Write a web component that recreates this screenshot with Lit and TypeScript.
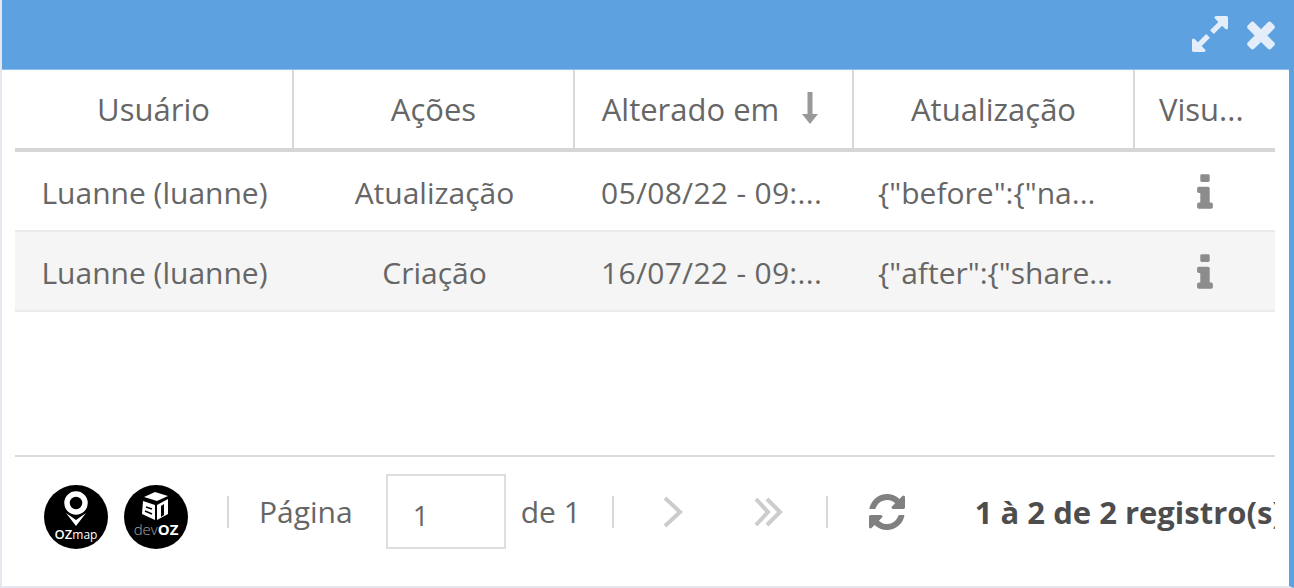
import { LitElement, html, css, svg } from 'lit';
import { customElement } from 'lit/decorators.js';

const ICONS = {
  expand: 'M883 1056q0 13-10 23l-332 332 144 144q19 19 19 45t-19 45-45 19h-448q-26 0-45-19t-19-45v-448q0-26 19-45t45-19 45 19l144 144 332-332q10-10 23-10t23 10l114 114q10 10 10 23zm781-864v448q0 26-19 45t-45 19-45-19l-144-144-332 332q-10 10-23 10t-23-10l-114-114q-10-10-10-23t10-23l332-332-144-144q-19-19-19-45t19-45 45-19h448q26 0 45 19t19 45z',
  times: 'M1490 1322q0 40-28 68l-136 136q-28 28-68 28t-68-28l-294-294-294 294q-28 28-68 28t-68-28l-136-136q-28-28-28-68t28-68l294-294-294-294q-28-28-28-68t28-68l136-136q28-28 68-28t68 28l294 294 294-294q28-28 68-28t68 28l136 136q28 28 28 68t-28 68l-294 294 294 294q28 28 28 68z',
  info: 'M1216 1344v128q0 26-19 45t-45 19h-512q-26 0-45-19t-19-45v-128q0-26 19-45t45-19h64v-384h-64q-26 0-45-19t-19-45v-128q0-26 19-45t45-19h384q26 0 45 19t19 45v576h64q26 0 45 19t19 45zm-128-1152v192q0 26-19 45t-45 19h-256q-26 0-45-19t-19-45v-192q0-26 19-45t45-19h256q26 0 45 19t19 45z',
  refresh: 'M1639 1056q0 5-1 7-64 268-268 434.5t-478 166.5q-146 0-282.5-55t-243.5-157l-129 129q-19 19-45 19t-45-19-19-45v-448q0-26 19-45t45-19h448q26 0 45 19t19 45-19 45l-137 137q71 66 161 102t187 36q134 0 250-65t186-179q11-17 53-117 8-23 30-23h192q13 0 22.5 9.5t9.5 22.5zm25-800v448q0 26-19 45t-45 19h-448q-26 0-45-19t-19-45 19-45l138-138q-148-137-349-137-134 0-250 65t-186 179q-11 17-53 117-8 23-30 23h-199q-13 0-22.5-9.5t-9.5-22.5v-7q65-268 270-434.5t480-166.5q146 0 284 55.5t245 156.5l130-129q19-19 45-19t45 19 19 45z',
};

const faIcon = (name: keyof typeof ICONS, size: number, cls: string) => html`
  <svg class=${cls} width=${size} height=${size} viewBox="0 0 1792 1792" fill="currentColor">
    <path d=${ICONS[name]}></path>
  </svg>
`;

const rows = [
  { user: 'Luanne (luanne)', action: 'Atualização', date: '05/08/22 - 09:...', update: '{"before":{"na...' },
  { user: 'Luanne (luanne)', action: 'Criação', date: '16/07/22 - 09:...', update: '{"after":{"share...' },
];

@customElement('app-root')
export class AppRoot extends LitElement {
  static styles = css`
    :host {
      display: block;
      height: 588px;
      font-family: 'Open Sans', 'Noto Sans', sans-serif;
      font-size: 30px;
      color: #666;
    }
    .window {
      box-sizing: border-box;
      height: 588px;
      display: flex;
      flex-direction: column;
      background: #fff;
      border-left: 2px solid #e4e8ee;
      border-right: 5px solid #5da1e0;
      border-bottom: 2px solid #e4e8ee;
      overflow: hidden;
    }
    .titlebar {
      flex: none;
      height: 69px;
      margin: 0 -5px 0 -2px;
      background: #5da1e0;
      border-bottom: 1px solid #8dbdea;
      display: flex;
      justify-content: flex-end;
      align-items: center;
      padding-right: 12px;
      color: #e3eefa;
    }
    .titlebar svg { display: block; }
    .expand { margin-right: 9px; margin-top: -1px; }
    .close { margin-top: -1px; }
    .content {
      flex: 1;
      display: flex;
      flex-direction: column;
      min-height: 0;
      padding: 0 14px 0 13px;
    }
    .grid {
      display: grid;
      grid-template-columns: 279px 281px 279px 281px 140px;
    }
    .head {
      height: 82px;
      box-sizing: border-box;
      border-bottom: 4px solid #d6d6d6;
      font-size: 31px;
    }
    .th {
      display: flex;
      align-items: center;
      justify-content: center;
      gap: 22px;
      border-right: 2px solid #d9d9d9;
      white-space: nowrap;
    }
    .th:last-child { border-right: none; justify-content: flex-start; padding-left: 24px; }
    .arrow { color: #999; margin: -2px 6px 0 0; }
    .row {
      height: 80px;
      box-sizing: border-box;
      border-bottom: 2px solid #ebebeb;
      align-items: center;
      padding-top: 3px;
    }
    .row.alt { background: #f5f5f5; }
    .td {
      padding: 0 24px;
      text-align: center;
      white-space: nowrap;
    }
    .td.left { text-align: left; }
    .td.date { letter-spacing: 0.3px; padding-left: 26px; padding-right: 0; }
    .td.info { padding: 0; color: #8c8c8c; }
    .td.info svg { display: block; margin: 0 auto; }
    .spacer { flex: 1; }
    .footer {
      flex: none;
      height: 131px;
      box-sizing: border-box;
      border-top: 2px solid #dcdcdc;
      display: flex;
      align-items: center;
      overflow: hidden;
      padding-bottom: 20px;
      white-space: nowrap;
    }
    .logos { display: flex; gap: 16px; margin-left: 29px; margin-top: 11px; }
    .logos svg { display: block; }
    .sep {
      flex: none;
      width: 2px;
      height: 32px;
      background: #d9d9d9;
    }
    .sep.first { margin-left: 39px; margin-right: 30px; }
    .sep.second { margin-left: 31px; }
    .sep.third { margin-left: 20px; }
    .input {
      flex: none;
      box-sizing: border-box;
      width: 120px;
      height: 75px;
      margin: 0 15px 0 33px;
      border: 2px solid #dedede;
      padding: 6px 0 0 25px;
      display: flex;
      align-items: center;
      font-size: 28px;
    }
    .nav { flex: none; display: flex; align-items: center; justify-content: center; color: #cccccc; }
    .nav svg { display: block; }
    .next { width: 118px; }
    .last { width: 74px; }
    .reload { width: 118px; color: #808080; }
    .total { font-weight: 700; margin-left: 29px; color: #4d4d4d; font-size: 31px; }
  `;

  private _ozmap() {
    return svg`
      <svg width="64" height="64" viewBox="0 0 64 64">
        <circle cx="32" cy="32" r="32" fill="#000"></circle>
        <circle cx="32" cy="18" r="9" fill="none" stroke="#fff" stroke-width="5.5"></circle>
        <path d="M22 28 L32 41 L42 28 L32 35 Z" fill="#fff"></path>
        <text x="32" y="54" text-anchor="middle" fill="#fff" font-family="Open Sans" font-size="13"><tspan font-weight="600">OZ</tspan><tspan font-weight="400" font-size="12">map</tspan></text>
      </svg>
    `;
  }

  private _devoz() {
    return svg`
      <svg width="64" height="64" viewBox="0 0 64 64">
        <circle cx="32" cy="32" r="32" fill="#000"></circle>
        <path d="M31 7 L44 11 L33 16 L20 12 Z" fill="#fff"></path>
        <path d="M19 16 L31 20 L31 35 L18 29 Z" fill="#fff"></path>
        <path d="M33 20 L44 14 L44 29 L33 35 Z" fill="#fff"></path>
        <path d="M37 21 L40 19 L40 30 L37 32 Z" fill="#000"></path>
        <path d="M22 22 L28 24 M21 26 L28 29" stroke="#000" stroke-width="1.5"></path>
        <text x="32" y="50" text-anchor="middle" font-family="Open Sans" font-size="15"><tspan fill="#a6a6a6" font-weight="300">dev</tspan><tspan fill="#fff" font-weight="700">OZ</tspan></text>
      </svg>
    `;
  }

  render() {
    return html`
      <div class="window">
        <div class="titlebar">
          ${faIcon('expand', 42, 'expand')}
          ${faIcon('times', 42, 'close')}
        </div>
        <div class="content">
          <div class="grid head">
            <div class="th">Usuário</div>
            <div class="th">Ações</div>
            <div class="th">
              <span>Alterado em</span>
              <svg class="arrow" width="18" height="34" viewBox="0 0 18 34" fill="currentColor">
                <path d="M6.5 1 H11.5 V23 H17 L9 33 L1 23 H6.5 Z"></path>
              </svg>
            </div>
            <div class="th">Atualização</div>
            <div class="th">Visu...</div>
          </div>
          ${rows.map(
            (r, i) => html`
              <div class="grid row ${i % 2 ? 'alt' : ''}">
                <div class="td">${r.user}</div>
                <div class="td">${r.action}</div>
                <div class="td left date">${r.date}</div>
                <div class="td left">${r.update}</div>
                <div class="td info">${faIcon('info', 44, '')}</div>
              </div>
            `
          )}
          <div class="spacer"></div>
          <div class="footer">
            <div class="logos">${this._ozmap()}${this._devoz()}</div>
            <div class="sep first"></div>
            <span>Página</span>
            <div class="input">1</div>
            <span>de 1</span>
            <div class="sep second"></div>
            <div class="nav next">
              <svg width="22" height="32" viewBox="0 0 22 32" fill="none" stroke="currentColor" stroke-width="4"><path d="M3 2 L18 16 L3 30"></path></svg>
            </div>
            <div class="nav last">
              <svg width="32" height="32" viewBox="0 0 32 32" fill="none" stroke="currentColor" stroke-width="4"><path d="M3 3 L15 16 L3 29 M14 3 L27 16 L14 29"></path></svg>
            </div>
            <div class="sep third"></div>
            <div class="nav reload">${faIcon('refresh', 42, '')}</div>
            <span class="total">1 à 2 de 2 registro(s)</span>
          </div>
        </div>
      </div>
    `;
  }
}
